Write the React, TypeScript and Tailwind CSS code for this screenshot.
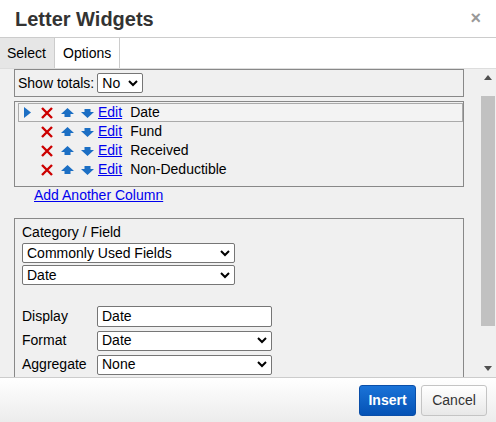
import React from "react";

const Sel = ({ w, v }: { w: string; v: string }) => (
  <div className={`${w} h-[20px] bg-white border border-[#767676] rounded-[2px] flex items-center justify-between px-[4px] text-[14px] text-black`}>
    <span>{v}</span>
    <svg width="10" height="7" viewBox="0 0 10 7"><path d="M1 1l4 4 4-4" stroke="#000" strokeWidth="2" fill="none" /></svg>
  </div>
);

const X = () => (
  <svg width="14" height="14" viewBox="0 0 14 14"><path d="M2 2l10 10M12 2L2 12" stroke="#c00" strokeWidth="2.4" /></svg>
);
const Up = () => (
  <svg width="13" height="10" viewBox="0 0 13 10"><path d="M6.5 0L13 6H9.5v3h-6V6H0z" fill="#1c6fc4" /></svg>
);
const Down = () => (
  <svg width="13" height="10" viewBox="0 0 13 10"><path d="M6.5 10L13 4H9.5V1h-6v3H0z" fill="#1c6fc4" /></svg>
);

const Row = ({ label, active }: { label: string; active?: boolean }) => (
  <div className={`h-[19px] flex items-center ${active ? "border border-[#aaa] bg-[#f3f3f3]" : "border border-transparent"}`}>
    <div className="w-[18px] pl-[5px]">
      {active && <svg width="7" height="11" viewBox="0 0 7 11"><path d="M0 0l7 5.5L0 11z" fill="#1c6fc4" /></svg>}
    </div>
    <div className="ml-[3px] flex items-center gap-[7px]"><X /><Up /><Down /></div>
    <a className="ml-[4px] text-[#00e] underline">Edit</a>
    <span className="ml-[8px]">{label}</span>
  </div>
);

export default function App() {
  return (
    <div className="w-[496px] h-[422px] bg-white flex flex-col overflow-hidden text-[14px] text-[#222]" style={{ fontFamily: "Arial, 'Liberation Sans', sans-serif" }}>
      <div className="h-[38px] flex items-center justify-between px-[15px] border-b border-[#ccc] shrink-0">
        <span className="text-[20px] font-bold text-[#333]">Letter Widgets</span>
        <span className="text-[18px] font-bold text-[#999]">×</span>
      </div>
      <div className="h-[30px] flex shrink-0">
        <div className="w-[55px] bg-[#e6e6e6] border-r border-[#ccc] flex items-center pl-[7px] text-black">Select</div>
        <div className="w-[65px] bg-white border-r border-[#ccc] flex items-center pl-[8px] text-black">Options</div>
      </div>
      <div className="flex-1 flex bg-[#f0f0f0] border-t border-[#ddd] min-h-0">
        <div className="flex-1 overflow-hidden pl-[14px] pr-[16px] pt-[0px] text-black">
          <div className="h-[28px] border border-[#888] flex items-center px-[3px] gap-[3px]">
            <span>Show totals:</span>
            <Sel w="w-[46px]" v="No" />
          </div>
          <div className="mt-[4px] h-[86px] border border-[#888] pt-[1px] pl-[3px]">
            <Row label="Date" active />
            <Row label="Fund" />
            <Row label="Received" />
            <Row label="Non-Deductible" />
          </div>
          <div className="pl-[20px] h-[17px] flex items-center"><a className="text-[#00e] underline">Add Another Column</a></div>
          <div className="mt-[14px] border border-[#888] pl-[7px] pt-[3px] h-[200px]">
            <div>Category / Field</div>
            <Sel w="w-[213px]" v="Commonly Used Fields" />
            <div className="mt-[2px]"><Sel w="w-[213px]" v="Date" /></div>
            <div className="mt-[21px] flex flex-col gap-[3px]">
              <div className="flex items-center"><span className="w-[75px]">Display</span><div className="w-[175px] h-[21px] bg-white border border-[#767676] rounded-[2px] px-[4px] flex items-center">Date</div></div>
              <div className="flex items-center"><span className="w-[75px]">Format</span><Sel w="w-[175px]" v="Date" /></div>
              <div className="flex items-center"><span className="w-[75px]">Aggregate</span><Sel w="w-[175px]" v="None" /></div>
              <div className="flex items-center"><span className="w-[75px]"></span><div className="w-[97px] h-[21px] bg-white border border-[#767676]" /><div className="ml-[71px] w-[65px] h-[21px] bg-white border border-[#767676]" /></div>
            </div>
          </div>
        </div>
        <div className="w-[16px] bg-[#f0f0f0] flex flex-col items-center">
          <div className="h-[17px] flex items-center"><svg width="8" height="5" viewBox="0 0 8 5"><path d="M4 0l4 5H0z" fill="#505050" /></svg></div>
          <div className="w-[14px] h-[230px] bg-[#c1c1c1] mt-[10px]" />
          <div className="flex-1" />
          <div className="h-[17px] flex items-center"><svg width="8" height="5" viewBox="0 0 8 5"><path d="M0 0h8L4 5z" fill="#505050" /></svg></div>
        </div>
      </div>
      <div className="h-[45px] shrink-0 border-t border-[#ccc] bg-gradient-to-b from-white to-[#ececec] flex items-center justify-end gap-[5px] pr-[9px]">
        <div className="w-[57px] h-[31px] rounded-[3px] bg-gradient-to-b from-[#1a73d8] to-[#0552b5] border border-[#0a4ea8] text-white font-semibold flex items-center justify-center">Insert</div>
        <div className="w-[66px] h-[31px] rounded-[3px] bg-gradient-to-b from-white to-[#e8e8e8] border border-[#c4c4c4] text-[#333] flex items-center justify-center">Cancel</div>
      </div>
    </div>
  );
}
